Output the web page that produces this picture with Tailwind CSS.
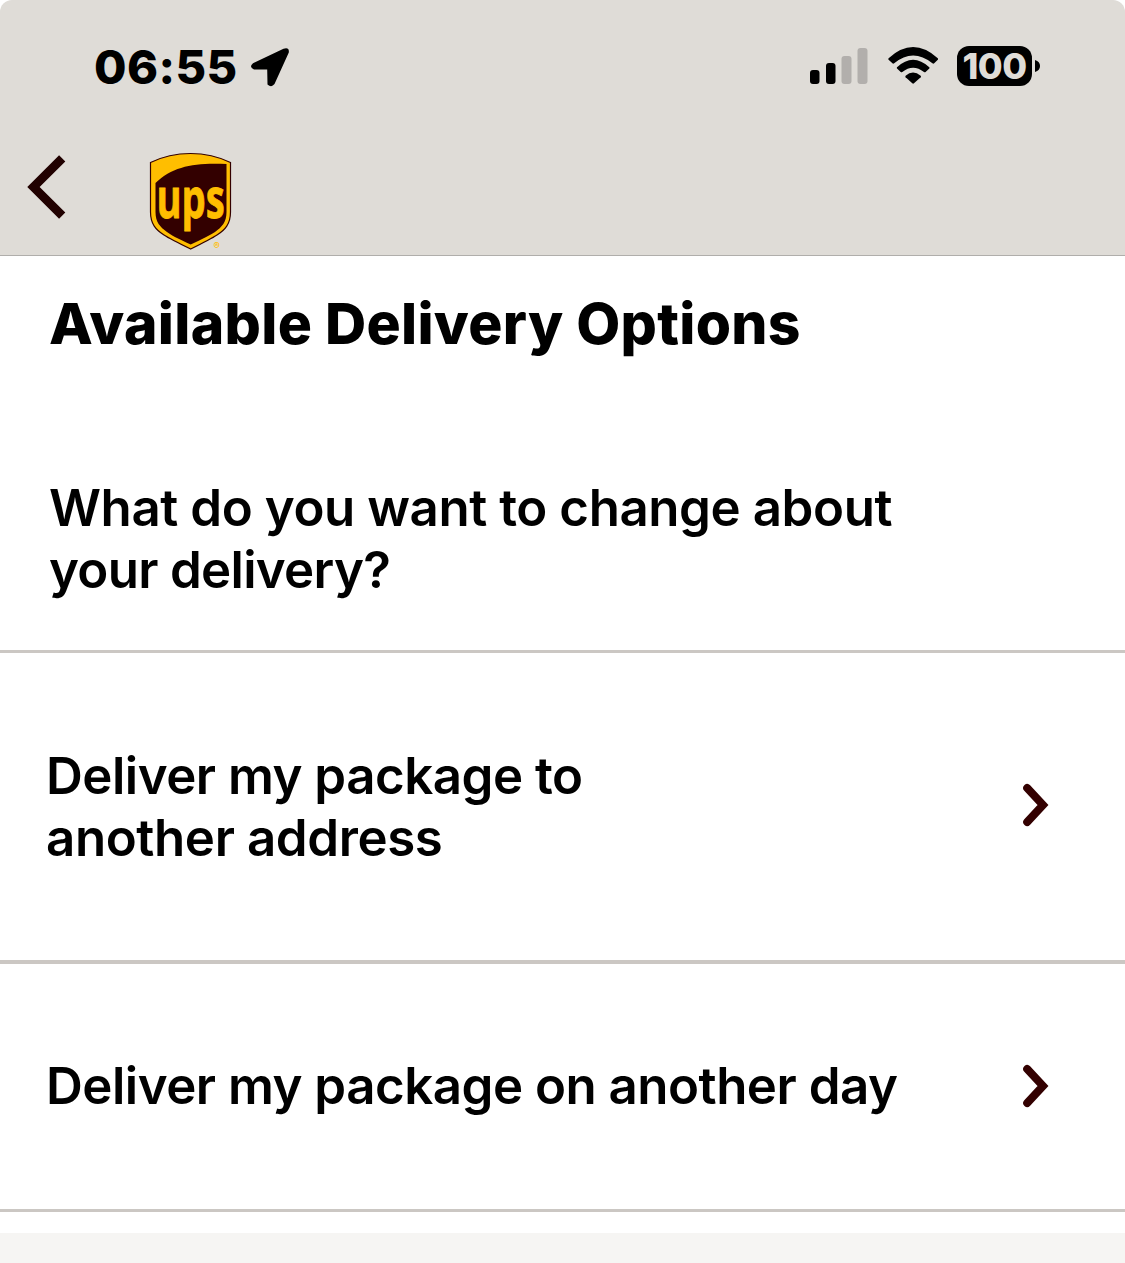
<!DOCTYPE html>
<html lang="en">
<head>
    <meta charset="UTF-8">
    <meta name="viewport" content="width=device-width, initial-scale=1.0">
    <title>UPS - Available Delivery Options</title>
    <script src="https://cdn.jsdelivr.net/npm/@tailwindcss/browser@4"></script>
</head>
<body class="bg-white font-['Inter',sans-serif] text-black">
    <div class="w-[1125px] h-[1263px] flex flex-col overflow-hidden">
        <header class="h-[256px] shrink-0 bg-[#dfdcd7] border-b border-[#b0aeab] rounded-t-[12px]">
            <!-- Status bar -->
            <div class="h-[134px] pl-[94px] pr-[85px] flex items-center justify-between">
                <div class="flex items-center">
                    <span class="w-[156px] text-[47px] font-extrabold leading-[60px] tracking-[0.4px]">06:55</span>
                    <svg class="w-[40px] h-[40px]" viewBox="0 0 40 40">
                        <path d="M3 16.200 33.500 1.700Q39.500-.200 38.800 5.500L24.500 37Q21.500 41 17.500 37.500L17.200 22.500H4Q-1.500 20 3 16.200Z"/>
                    </svg>
                </div>
                <div class="flex items-center pb-[2px]">
                    <svg class="w-[58px] h-[36px]" viewBox="0 0 58 36">
                        <rect x="0" y="22" width="9.500" height="14" rx="3"/>
                        <rect x="16" y="15" width="9.500" height="21" rx="3"/>
                        <rect x="31.500" y="8" width="10" height="28" rx="3" fill="#b2afac"/>
                        <rect x="47.500" y="0" width="10" height="36" rx="3" fill="#b2afac"/>
                    </svg>
                    <svg class="w-[50px] h-[37px] ml-[20px] mb-[1px]" viewBox="0 0 50 37">
                        <path d="M.6 11.200Q25-11.200 49.800 11.200Q50.500 12 49.800 12.800L46.200 16.300Q45.400 17 44.400 16.300Q25 .8 6.200 16.300Q5.200 17 4.400 16.300L.6 12.800Q0 12 .6 11.200Z"/>
                        <path d="M9 20.200Q25 5.200 41.300 20.200Q41.900 21 41.300 21.600L37.600 25Q36.800 25.600 36 25Q25 16.500 14.300 25Q13.500 25.600 12.700 25L9 21.600Q8.500 21 9 20.200Z"/>
                        <path d="M17.600 28.800Q25 22.300 32.700 28.800Q33.400 29.500 32.700 30.200L26 36.300Q25.100 37 24.300 36.300L17.600 30.200Q17 29.500 17.600 28.800Z"/>
                    </svg>
                    <div class="ml-[19px] w-[75px] h-[40px] rounded-[12px] bg-black text-[#dfdcd7] flex items-center justify-center">
                        <span class="text-[36px] leading-[40px] font-extrabold tracking-[-0.5px]">100</span>
                    </div>
                    <svg class="w-[5px] h-[12px] ml-[3px]" viewBox="0 0 5 12"><path d="M0 0Q5 1.500 5 6T0 12Z"/></svg>
                </div>
            </div>

            <!-- Navigation -->
            <div class="pl-[27px] pt-[18px] flex items-start">
                <svg class="w-[39px] h-[66px] mt-[2px]" viewBox="0 0 39 66">
                    <path d="M35.200 4.300 6.500 33 35.200 61.700" fill="none" stroke="#210100" stroke-width="8.800"/>
                </svg>
                <svg class="w-[84px] h-[100px] ml-[83px] overflow-visible" viewBox="0 0 84 100">
                    <path d="M1.500 10.500Q20 1.500 41.500 1.500T81.500 10.500V60C81.500 72 76 78 68 83Q62 87 41.700 97Q21 87 15 83C7 78 1.500 72 1.500 60Z" fill="#ffbe00" stroke="#330000" stroke-width="1.200"/>
                    <path d="M6.500 31C24 14 46 10.500 77.500 12V60C77.500 70 73 75 66 80Q60 84 41.700 92.500Q23 84 18 80C11 75 6.500 70 6.500 60Z" fill="#330000"/>
                    <text transform="translate(7.400 65.800) scale(.69 1)" font-family="Open Sans" font-weight="700" font-size="55.500" fill="#ffbe00" stroke="#ffbe00" stroke-width=".8">ups</text>
                    <text x="64.500" y="97" font-family="Inter" font-weight="600" font-size="9.500" fill="#ffbe00">®</text>
                </svg>
            </div>
        </header>

        <main>
            <section class="h-[397px] pt-[33px] pl-[49px] border-b-[3px] border-[#cbc7c3]">
                <h1 class="text-[57px] leading-[70px] font-extrabold tracking-[0.3px]">Available Delivery Options</h1>
                <p class="mt-[118px] text-[51px] leading-[62px] font-semibold tracking-[-0.42px] w-[900px]">What do you want to change about<br><span class="tracking-[-0.7px]">your delivery?</span></p>
            </section>
            <a href="#" class="h-[311px] pl-[46px] pr-[76px] flex items-center justify-between border-b-[4px] border-[#cbc7c3]">
                <span class="text-[51px] leading-[62px] font-semibold tracking-[-0.5px]">Deliver my package to<br><span class="tracking-[-0.4px]">another address</span></span>
                <svg class="w-[27px] h-[44px] mb-[4px]" viewBox="0 0 27 44"><path d="M5.200 5 21 22 5.200 39" fill="none" stroke="#330000" stroke-width="8" stroke-linecap="round"/></svg>
            </a>
            <a href="#" class="h-[248px] pl-[46px] pr-[76px] pb-[1px] flex items-center justify-between border-b-[3px] border-[#cbc7c3]">
                <span class="text-[51px] leading-[62px] font-semibold tracking-[-0.5px]">Deliver my package on another day</span>
                <svg class="w-[27px] h-[44px]" viewBox="0 0 27 44"><path d="M5.200 5 21 22 5.200 39" fill="none" stroke="#330000" stroke-width="8" stroke-linecap="round"/></svg>
            </a>
        </main>
        <footer class="mt-[21px] grow bg-[#f6f5f3]"></footer>
    </div>
</body>
</html>
